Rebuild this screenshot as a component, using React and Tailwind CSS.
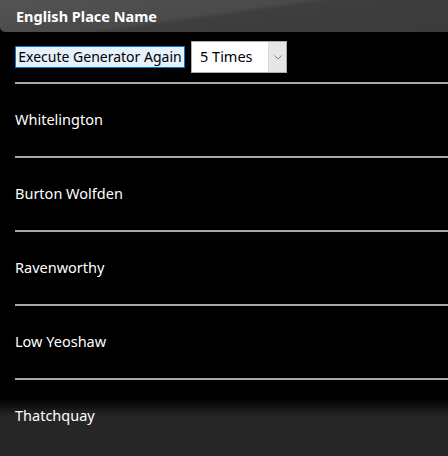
const names = ['Whitelington', 'Burton Wolfden', 'Ravenworthy', 'Low Yeoshaw', 'Thatchquay'];

export default function App() {
  return (
    <div
      className="w-[448px] h-[456px] overflow-hidden text-white bg-[linear-gradient(to_bottom,#000_398px,#262626_416px)]"
      style={{ fontFamily: '"Noto Sans", "Open Sans", sans-serif' }}
    >
      {/* Title bar */}
      <div className="h-[32px] rounded-bl-[5px] bg-[linear-gradient(172deg,#545454_0%,#4a4a4a_45%,#3e3e3e_50%,#3b3b3b_100%)] flex items-center px-[16px]">
        <span className="text-[14.5px] font-bold leading-none">English Place Name</span>
      </div>

      {/* Controls */}
      <div className="flex items-center gap-[6px] pl-[15px] pt-[9px] pb-[9px]">
        <button className="h-[22px] w-[170px] border border-[#0078d7] bg-[#e5f1fb] text-black text-[14px] leading-none px-[1px] whitespace-nowrap">
          Execute Generator Again
        </button>
        <div className="h-[32px] w-[96px] border border-[#abadb3] bg-white flex">
          <span className="flex-1 flex items-center pl-[8px] text-black text-[14.5px]">5 Times</span>
          <span className="w-[18px] bg-[#e6e6e6] border-l border-[#dadada] flex items-center justify-center">
            <svg width="8" height="5" viewBox="0 0 8 5" fill="none">
              <path d="M0.5 0.5 L4 4 L7.5 0.5" stroke="#808080" strokeWidth="1" />
            </svg>
          </span>
        </div>
      </div>

      {/* List */}
      <div className="ml-[15px]">
        {names.map((n) => (
          <div key={n}>
            <div className="h-[2px] bg-[#a8a8a8]" />
            <div className="h-[72px] flex items-center text-[14.5px]">{n}</div>
          </div>
        ))}
      </div>
    </div>
  );
}
